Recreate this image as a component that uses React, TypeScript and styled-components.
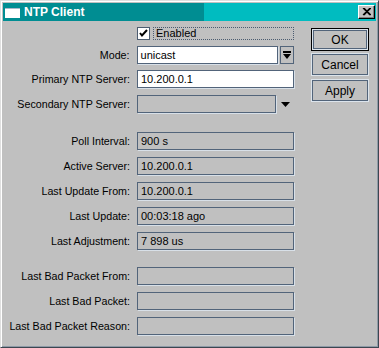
import React from 'react';
import styled, { createGlobalStyle } from 'styled-components';

const GlobalStyle = createGlobalStyle`
  html, body {
    margin: 0;
    padding: 0;
    background: #c0c0c0;
  }
  * {
    box-sizing: border-box;
  }
`;

const fieldRows = [
  { label: 'Poll Interval:', value: '900 s' },
  { label: 'Active Server:', value: '10.200.0.1' },
  { label: 'Last Update From:', value: '10.200.0.1' },
  { label: 'Last Update:', value: '00:03:18 ago' },
  { label: 'Last Adjustment:', value: '7 898 us' },
];

const badRows = ['Last Bad Packet From:', 'Last Bad Packet:', 'Last Bad Packet Reason:'];

const App = () => {
  return (
    <>
      <GlobalStyle />
      <Window>
        <TitleBar>
          <WindowIcon width="15" height="10" viewBox="0 0 15 10">
            <rect x="0" y="0" width="15" height="10" fill="#ffffff" />
            <rect x="0" y="0" width="15" height="1" fill="#a8b8c8" />
          </WindowIcon>
          <Title>NTP Client</Title>
          <CloseButton>
            <svg width="9" height="8" viewBox="0 0 9 8">
              <path d="M1 0 L8 7 M2 0 L9 7 M8 0 L1 7 M9 0 L2 7" stroke="#000" strokeWidth="1.1" />
            </svg>
          </CloseButton>
        </TitleBar>

        <Body>
          <Form>
            <CheckRow>
              <CheckBox>
                <svg width="9" height="9" viewBox="0 0 9 9">
                  <path d="M1 4 L3 6.5 L8 1" stroke="#000" strokeWidth="2" fill="none" />
                </svg>
              </CheckBox>
              <CheckLabel>Enabled</CheckLabel>
            </CheckRow>

            <Row $space={6}>
              <Label>Mode:</Label>
              <Field $editable $width={142}>unicast</Field>
              <DropButton>
                <svg width="8" height="9" viewBox="0 0 8 9">
                  <rect x="0" y="0" width="8" height="2" fill="#000" />
                  <path d="M0 3 H8 L4 8 Z" fill="#000" />
                </svg>
              </DropButton>
            </Row>

            <Row>
              <Label>Primary NTP Server:</Label>
              <Field $editable>10.200.0.1</Field>
            </Row>

            <Row $space={19}>
              <Label>Secondary NTP Server:</Label>
              <Field $width={139} />
              <Arrow width="9" height="5" viewBox="0 0 9 5">
                <path d="M0 0 H9 L4.5 5 Z" fill="#000" />
              </Arrow>
            </Row>

            {fieldRows.map((r, i) => (
              <Row key={r.label} $space={i === fieldRows.length - 1 ? 17 : 7}>
                <Label>{r.label}</Label>
                <Field>{r.value}</Field>
              </Row>
            ))}

            {badRows.map((label) => (
              <Row key={label}>
                <Label>{label}</Label>
                <Field />
              </Row>
            ))}
          </Form>

          <Buttons>
            <Button $default>OK</Button>
            <Button>Cancel</Button>
            <Button>Apply</Button>
          </Buttons>
        </Body>
      </Window>
    </>
  );
};

export default App;

const Window = styled.div`
  width: 379px;
  height: 348px;
  background: #c0c0c0;
  border-top: 1px solid #dfdfdf;
  border-left: 1px solid #dfdfdf;
  border-right: 1px solid #3c4650;
  border-bottom: 1px solid #3c4650;
  box-shadow: inset 1px 1px 0 #ffffff, inset -1px -1px 0 #8e9aa6;
  padding: 2px;
  font-family: "Liberation Sans", Arial, sans-serif;
  font-size: 10.7px;
  color: #000;
  display: flex;
  flex-direction: column;
`;

const TitleBar = styled.div`
  height: 18px;
  display: flex;
  align-items: center;
  padding-left: 2px;
  padding-right: 1px;
  background: linear-gradient(to right, #008d92 0, #008d92 201px, #00bcc0 201px, #00bcc0 100%);
`;

const WindowIcon = styled.svg`
  display: block;
  margin-top: 1px;
`;

const Title = styled.div`
  margin-left: 4px;
  color: #ffffff;
  font-weight: bold;
  font-size: 12px;
  flex: 1;
`;

const CloseButton = styled.div`
  width: 17px;
  height: 14px;
  background: #c0c0c0;
  border-top: 1px solid #ffffff;
  border-left: 1px solid #ffffff;
  border-right: 1px solid #000;
  border-bottom: 1px solid #000;
  box-shadow: inset -1px -1px 0 #808080;
  display: flex;
  align-items: center;
  justify-content: center;
  padding-bottom: 1px;
`;

const Body = styled.div`
  flex: 1;
  display: flex;
  padding-top: 6px;
`;

const Form = styled.div`
  width: 291px;
  display: flex;
  flex-direction: column;
`;

const CheckRow = styled.div`
  height: 13px;
  margin-bottom: 6px;
  padding-left: 134px;
  display: flex;
  align-items: center;
`;

const CheckBox = styled.div`
  width: 13px;
  height: 13px;
  background: #ffffff;
  border: 1px solid #4c5c70;
  display: flex;
  align-items: center;
  justify-content: center;
`;

const CheckLabel = styled.div`
  margin-left: 3px;
  width: 141px;
  height: 13px;
  border: 1px dotted #4c5c70;
  padding-left: 2px;
  font-size: 11px;
  line-height: 11px;
`;

const Row = styled.div<{ $space?: number }>`
  height: 18px;
  margin-bottom: ${(p) => p.$space ?? 7}px;
  display: flex;
  align-items: center;
`;

const Label = styled.div`
  width: 127px;
  margin-right: 7px;
  text-align: right;
  white-space: nowrap;
`;

const Field = styled.div<{ $editable?: boolean; $width?: number }>`
  width: ${(p) => p.$width ?? 157}px;
  height: 18px;
  background: ${(p) => (p.$editable ? '#ffffff' : '#c0c0c0')};
  border: 1px solid #52647a;
  box-shadow: 1px 1px 0 #d8e0e8;
  padding-left: 3px;
  font-size: 11px;
  line-height: 16px;
  white-space: nowrap;
  overflow: hidden;
`;

const DropButton = styled.div`
  width: 14px;
  height: 18px;
  margin-left: 2px;
  border: 1px solid #52647a;
  background: #c0c0c0;
  display: flex;
  align-items: center;
  justify-content: center;
`;

const Arrow = styled.svg`
  display: block;
  margin-left: 5px;
`;

const Buttons = styled.div`
  margin-left: 17px;
  padding-top: 1px;
  display: flex;
  flex-direction: column;
`;

const Button = styled.div<{ $default?: boolean }>`
  width: 58px;
  height: 23px;
  margin-bottom: ${(p) => (p.$default ? 2 : 3)}px;
  border: 1px solid ${(p) => (p.$default ? '#000' : '#dce4ec')};
  box-shadow: ${(p) =>
    p.$default
      ? 'inset 0 0 0 1px #dce4ec, inset 0 0 0 2px #52647a'
      : 'inset 0 0 0 1px #52647a'};
  display: flex;
  align-items: center;
  justify-content: center;
  font-size: 12px;
`;
